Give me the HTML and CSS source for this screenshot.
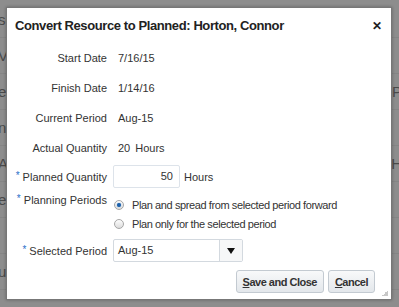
FILE: index.html
```html
<!DOCTYPE html>
<html>
<head>
    <title>Convert Resource to Planned</title>
    <link rel="stylesheet" href="styles.css">
</head>
<body>
    <div class="page">
        <div class="page-row"><span class="frag-left">sc</span></div>
        <div class="page-row"><span class="frag-left">Vi</span></div>
        <div class="page-row"><span class="frag-left">e</span><span class="frag-right">P</span></div>
        <div class="page-row"><span class="frag-left">nt</span></div>
        <div class="page-row"><span class="frag-left">A</span><span class="frag-right">H</span></div>
        <div class="page-row"><span class="frag-left">e</span></div>
        <div class="page-row"></div>
        <div class="page-row"><span class="frag-left">u</span></div>
    </div>

    <div class="dialog">
        <div class="dialog-header">
            <h1>Convert Resource to Planned: Horton, Connor</h1>
            <span class="close">&#x2715;</span>
        </div>

        <div class="form">
            <div class="row">
                <label>Start Date</label>
                <span class="value">7/16/15</span>
            </div>
            <div class="row">
                <label>Finish Date</label>
                <span class="value">1/14/16</span>
            </div>
            <div class="row">
                <label>Current Period</label>
                <span class="value">Aug-15</span>
            </div>
            <div class="row">
                <label>Actual Quantity</label>
                <span class="value">20<span class="unit-ro">Hours</span></span>
            </div>
            <div class="row row-input">
                <label><span class="req">*</span> Planned Quantity</label>
                <span class="field">
                    <span class="text-input">50</span>
                    <span class="unit">Hours</span>
                </span>
            </div>
            <div class="row row-radio">
                <label class="label-top"><span class="req">*</span> Planning Periods</label>
                <div class="radios">
                    <div class="radio-option">
                        <span class="radio checked"></span>
                        <span class="radio-text">Plan and spread from selected period forward</span>
                    </div>
                    <div class="radio-option">
                        <span class="radio"></span>
                        <span class="radio-text">Plan only for the selected period</span>
                    </div>
                </div>
            </div>
            <div class="row row-select">
                <label><span class="req">*</span> Selected Period</label>
                <div class="select">
                    <span class="select-text">Aug-15</span>
                    <span class="select-btn"><span class="arrow"></span></span>
                </div>
            </div>
        </div>

        <div class="buttons">
            <button><u>S</u>ave and Close</button>
            <button><u>C</u>ancel</button>
        </div>
        <span class="grip"></span>
    </div>
</body>
</html>
```

FILE: styles.css
```css
body {
    margin: 0;
    background-color: #8d8d8d;
    font-family: "Liberation Sans", Arial, sans-serif;
    color: #333;
    height: 307px;
    overflow: hidden;
}
.page {
    padding-top: 2px;
}
.page-row {
    height: 35px;
    border-bottom: 1px solid #858585;
    display: flex;
    justify-content: space-between;
    align-items: center;
    font-size: 15px;
    color: #4a4a4a;
}
.frag-left {
    margin-left: -2px;
}
.frag-right {
    margin-right: -3px;
}
.dialog {
    position: absolute;
    left: 6px;
    top: 7px;
    width: 384px;
    height: 291px;
    background-color: #fff;
    border: 1px solid #777;
    box-shadow: 0 0 3px rgba(0, 0, 0, 0.3);
}
.dialog-header {
    height: 35px;
    display: flex;
    align-items: center;
    justify-content: space-between;
    padding: 0 9px 0 8px;
}
.dialog-header h1 {
    margin: 0;
    font-size: 13px;
    font-weight: bold;
    color: #222;
    letter-spacing: -0.4px;
}
.close {
    font-size: 12px;
    font-weight: bold;
    color: #222;
}
.form {
    font-size: 11px;
}
.row {
    display: grid;
    grid-template-columns: 100px auto;
    column-gap: 6px;
    height: 30px;
    align-items: center;
}
.row label {
    text-align: right;
    color: #333;
    white-space: nowrap;
}
.value {
    padding-left: 5px;
}
.unit-ro {
    margin-left: 5px;
}
.req {
    color: #2a6fc9;
    font-size: 10px;
    vertical-align: 2px;
}
.row-input {
    height: 23px;
    margin-top: 2px;
}
.field {
    display: flex;
    align-items: center;
}
.text-input {
    box-sizing: border-box;
    width: 67px;
    height: 23px;
    border: 1px solid #dde3ea;
    border-radius: 2px;
    text-align: right;
    padding-right: 6px;
    line-height: 21px;
    font-size: 11px;
}
.unit {
    margin-left: 4px;
}
.row-radio {
    height: 38px;
    margin-top: 7px;
    align-items: start;
}
.label-top {
    margin-top: -3px;
    line-height: 14px;
}
.radio-option {
    display: flex;
    align-items: center;
    height: 19px;
    gap: 8px;
    margin-left: 1px;
}
.radio-text {
    letter-spacing: -0.4px;
}
.radio {
    box-sizing: border-box;
    width: 10px;
    height: 10px;
    border-radius: 50%;
    border: 1px solid #a6a6a6;
    background: linear-gradient(#fdfdfd, #dcdcdc);
    position: relative;
}
.radio.checked::after {
    content: "";
    position: absolute;
    left: 2px;
    top: 2px;
    width: 4px;
    height: 4px;
    border-radius: 50%;
    background: #1d5fa8;
    box-shadow: 0 0 1px #4a90d6;
}
.row-select {
    height: 23px;
    margin-top: 6px;
}
.select {
    box-sizing: border-box;
    width: 130px;
    height: 23px;
    border: 1px solid #d3d9df;
    border-radius: 2px;
    display: flex;
}
.select-text {
    flex: 1;
    line-height: 21px;
    padding-left: 4px;
}
.select-btn {
    width: 22px;
    border-left: 1px solid #d3d9df;
    background: #f6f7f8;
    display: flex;
    align-items: center;
    justify-content: center;
}
.arrow {
    width: 0;
    height: 0;
    border-left: 4px solid transparent;
    border-right: 4px solid transparent;
    border-top: 6px solid #111;
}
.buttons {
    display: flex;
    justify-content: flex-end;
    gap: 4px;
    margin-top: 8px;
    padding-right: 16px;
}
button {
    height: 23px;
    padding: 0 6px;
    font-family: "Liberation Sans", Arial, sans-serif;
    font-size: 11px;
    font-weight: bold;
    letter-spacing: -0.5px;
    color: #333;
    background: linear-gradient(#f8f9fa, #e3e7eb);
    border: 1px solid #c3cad1;
    border-radius: 3px;
}
.grip {
    position: absolute;
    right: 3px;
    bottom: 3px;
    width: 6px;
    height: 6px;
    background: linear-gradient(135deg, transparent 50%, #c8c8c8 50%);
}
```
